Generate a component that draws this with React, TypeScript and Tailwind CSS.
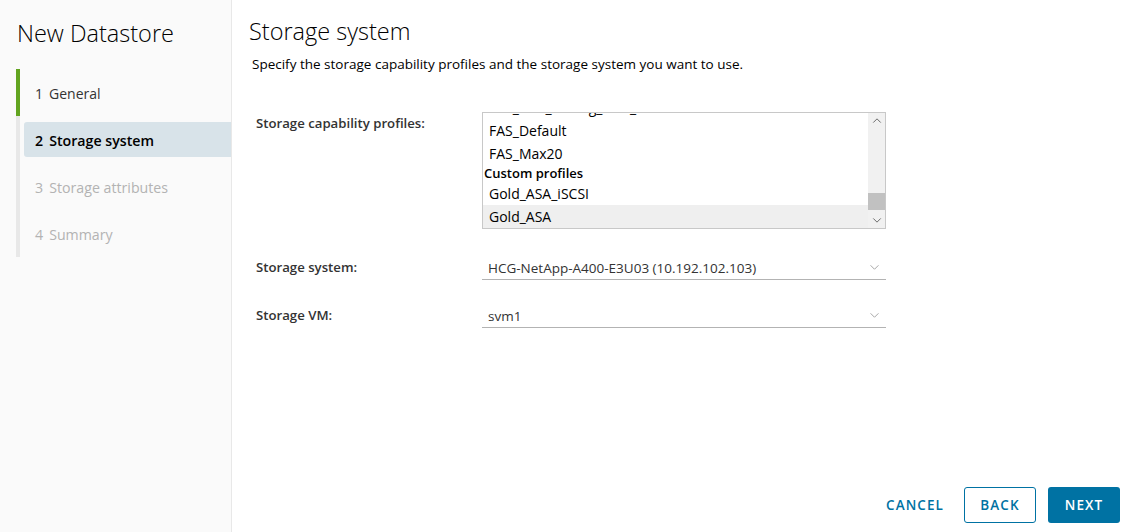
import React from "react";

const STEPS = [
  { n: 1, label: "General", state: "done" },
  { n: 2, label: "Storage system", state: "active" },
  { n: 3, label: "Storage attributes", state: "todo" },
  { n: 4, label: "Summary", state: "todo" },
];

function Chevron({ className }: { className?: string }) {
  return (
    <svg viewBox="0 0 12 8" className={className} fill="none" stroke="currentColor" strokeWidth="1">
      <path d="M1.5 1.5 L6 6 L10.5 1.5" />
    </svg>
  );
}

function Select({ value }: { value: string }) {
  return (
    <div className="flex h-[28px] w-[404px] items-center justify-between border-b border-[#b3b3b3] pl-[6px] pr-[6px] pt-[4px] text-[13.5px] text-[#333]">
      <span>{value}</span>
      <Chevron className="h-[7px] w-[11px] text-[#9a9a9a]" />
    </div>
  );
}

export default function App() {
  return (
    <div
      className="flex h-[532px] w-[1134px] bg-white text-[#333]"
      style={{ fontFamily: '"Open Sans", "Liberation Sans", sans-serif' }}
    >
      {/* Sidebar */}
      <aside className="w-[232px] shrink-0 border-r border-[#e8e8e8] bg-[#fafafa]">
        <h1 className="pl-[17px] pt-[17px] text-[23.5px] font-light leading-[32px] text-[#000]">New Datastore</h1>
        <div className="mt-[20px] flex pl-[16px]">
          <ol className="w-full border-l-4 border-[#e8e8e8]">
            {STEPS.map((s) => (
              <li
                key={s.n}
                className={
                  "relative flex h-[47px] items-center pl-[15px] pt-[2px] " +
                  (s.state === "active"
                    ? "text-[14.2px] font-semibold text-[#000]"
                    : s.state === "done"
                    ? "text-[14px] text-[#333]"
                    : "text-[14.2px] text-[#b3b3b3]")
                }
              >
                {s.state === "done" && <span className="absolute -left-[4px] top-0 h-full w-[4px] bg-[#62a420]" />}
                {s.state === "active" && (
                  <span className="absolute inset-y-[6px] left-[4px] right-0 rounded-l-[3px] bg-[#d8e3e9]" />
                )}
                <span className="relative">
                  {s.n}
                  <span className="ml-[6px]">{s.label}</span>
                </span>
              </li>
            ))}
          </ol>
        </div>
      </aside>

      {/* Main */}
      <main className="flex flex-1 flex-col">
        <div className="pl-[17px] pt-[14px]">
          <h2 className="text-[23.5px] font-light leading-[34px] text-[#000]">Storage system</h2>
          <p className="mt-[6px] pl-[3px] text-[13.5px] text-[#000]">
            Specify the storage capability profiles and the storage system you want to use.
          </p>
        </div>

        <div className="mt-[38px] grid grid-cols-[226px_404px] pl-[24px]">
          <div className="pt-[2px] text-[13.2px] font-semibold">Storage capability profiles:</div>
          <div className="flex h-[117px] overflow-hidden border border-[#c8c8c8] text-[14px] text-[#000]">
            <div className="flex-1 overflow-hidden">
              <div className="-mt-[17px]">
                <div className="flex h-[23px] items-center pl-[6px]">FAS_Perf_Tiering_Max_Default</div>
                <div className="flex h-[23px] items-center pl-[6px]">FAS_Default</div>
                <div className="flex h-[23px] items-center pl-[6px]">FAS_Max20</div>
                <div className="flex h-[17px] items-center pl-[1px] text-[13px] font-semibold">Custom profiles</div>
                <div className="flex h-[23px] items-center pl-[6px]">Gold_ASA_iSCSI</div>
                <div className="flex h-[23px] items-center bg-[#efefef] pl-[6px]">Gold_ASA</div>
              </div>
            </div>
            <div className="relative flex w-[17px] flex-col items-center justify-between bg-[#f1f1f1] py-[4px]">
              <Chevron className="h-[7px] w-[10px] rotate-180 text-[#505050]" />
              <span className="absolute left-0 top-[80px] h-[17px] w-[17px] bg-[#c1c1c1]" />
              <Chevron className="h-[7px] w-[10px] text-[#505050]" />
            </div>
          </div>

          <div className="mt-[23px] flex items-center pt-[4px] text-[13.2px] font-semibold">Storage system:</div>
          <div className="mt-[23px]">
            <Select value="HCG-NetApp-A400-E3U03 (10.192.102.103)" />
          </div>

          <div className="mt-[20px] flex items-center pt-[4px] text-[13.2px] font-semibold">Storage VM:</div>
          <div className="mt-[20px]">
            <Select value="svm1" />
          </div>
        </div>

        <div className="mt-auto flex items-center justify-end gap-[12px] pb-[9px] pr-[14px]">
          <button className="h-[36px] px-[8px] text-[13.5px] font-semibold tracking-[0.08em] text-[#0072a3]">
            CANCEL
          </button>
          <button className="h-[36px] w-[72px] rounded-[3px] border border-[#0072a3] text-[13.5px] font-semibold tracking-[0.08em] text-[#0072a3]">
            BACK
          </button>
          <button className="h-[36px] w-[72px] rounded-[3px] bg-[#0072a3] text-[13.5px] font-semibold tracking-[0.08em] text-white">
            NEXT
          </button>
        </div>
      </main>
    </div>
  );
}
